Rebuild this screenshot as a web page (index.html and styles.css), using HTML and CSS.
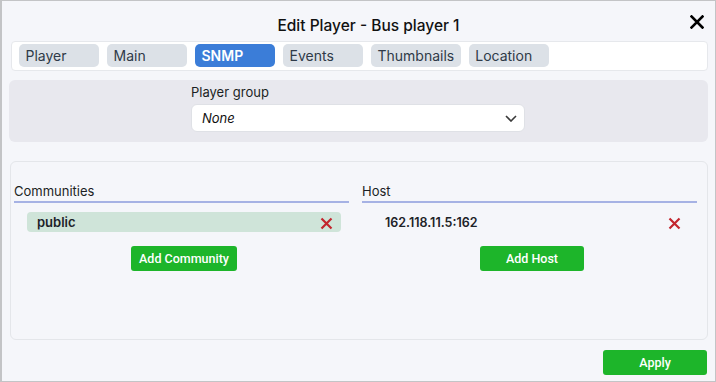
FILE: index.html
```html
<!DOCTYPE html>
<html lang="en">
<head>
<meta charset="utf-8">
<title>Edit Player</title>
<link rel="stylesheet" href="styles.css">
</head>
<body>
<div class="dialog">
  <div class="header">
    <div class="title">Edit Player - Bus player 1</div>
    <svg class="close" width="14" height="14" viewBox="0 0 14 14"><path d="M1.5 1.5 L12.5 12.5 M12.5 1.5 L1.5 12.5" stroke="#000" stroke-width="2.6" stroke-linecap="square" fill="none"/></svg>
  </div>
  <div class="tabs">
    <div class="tab">Player</div>
    <div class="tab">Main</div>
    <div class="tab active">SNMP</div>
    <div class="tab">Events</div>
    <div class="tab">Thumbnails</div>
    <div class="tab">Location</div>
  </div>
  <div class="group-panel">
    <div class="field-label">Player group</div>
    <div class="select">
      <span class="select-value">None</span>
      <svg class="chevron" width="12" height="7" viewBox="0 0 12 7"><path d="M1 1 L6 6 L11 1" stroke="#3a3a3a" stroke-width="1.6" fill="none"/></svg>
    </div>
  </div>
  <div class="snmp-panel">
    <div class="column">
      <div class="col-head">Communities</div>
      <div class="item filled">
        <span class="item-text">public</span>
        <svg class="remove" width="13" height="13" viewBox="0 0 13 13"><path d="M1.5 1.5 L11.5 11.5 M11.5 1.5 L1.5 11.5" stroke="#c3262e" stroke-width="2.2" fill="none"/></svg>
      </div>
      <div class="btn-row"><button class="btn">Add Community</button></div>
    </div>
    <div class="column">
      <div class="col-head">Host</div>
      <div class="item">
        <span class="item-text host">162.118.11.5:162</span>
        <svg class="remove" width="13" height="13" viewBox="0 0 13 13"><path d="M1.5 1.5 L11.5 11.5 M11.5 1.5 L1.5 11.5" stroke="#c3262e" stroke-width="2.2" fill="none"/></svg>
      </div>
      <div class="btn-row"><button class="btn wide">Add Host</button></div>
    </div>
  </div>
  <div class="footer">
    <button class="btn apply">Apply</button>
  </div>
</div>
</body>
</html>
```
FILE: styles.css
```css
* { box-sizing: border-box; }
html, body { margin: 0; padding: 0; }
body {
  font-family: Inter, "Noto Sans", sans-serif;
  color: #1b1f24;
  background: #f5f6fa;
}
.dialog {
  width: 716px;
  height: 382px;
  border: 1px solid #c3c4c6;
  border-left-width: 2px;
  background: #f5f6fa;
  display: flex;
  flex-direction: column;
}
.header {
  position: relative;
  height: 40px;
  display: flex;
  align-items: center;
  justify-content: center;
  padding-top: 9px;
}
.title {
  font-size: 15.5px;
  font-weight: 500;
  color: #111;
  padding-left: 20px;
}
.close {
  position: absolute;
  right: 11px;
  top: 14px;
}
.tabs {
  margin: 0 7px 0 9px;
  height: 30px;
  background: #fff;
  border: 1px solid #e6e8ec;
  border-radius: 4px;
  display: flex;
  gap: 8px;
  padding: 2px 7px;
}
.tab {
  min-width: 80px;
  height: 23px;
  padding: 0 6.5px;
  background: #dce1e7;
  color: #2f3a48;
  border-radius: 5px;
  font-size: 14px;
  line-height: 23px;
}
.tab.active {
  background: #3b7dd8;
  color: #fff;
  font-weight: 600;
}
.group-panel {
  margin: 9px 7px 0 7px;
  height: 62px;
  background: #e8e8ee;
  border-radius: 6px;
  padding: 4px 0 0 182px;
}
.field-label {
  font-size: 13px;
  line-height: 16px;
  color: #1b1f24;
}
.select {
  margin-top: 4px;
  width: 334px;
  height: 28px;
  background: #fff;
  border: 1px solid #dfe1e6;
  border-radius: 6px;
  display: flex;
  align-items: center;
  justify-content: space-between;
  padding: 0 7px 0 10px;
}
.select-value {
  font-size: 13px;
  font-style: italic;
  color: #111;
}
.snmp-panel {
  margin: 19px 7px 0 8px;
  height: 179px;
  border: 1px solid #e4e6ea;
  border-radius: 6px;
  display: grid;
  grid-template-columns: 335px 335px;
  column-gap: 13px;
  align-content: start;
  padding: 21px 10px 0 3px;
}
.col-head {
  font-size: 13px;
  line-height: 16px;
  padding-bottom: 2px;
  border-bottom: 2px solid #a6b2e4;
  color: #1b1f24;
}
.item {
  margin: 9px 8px 0 13px;
  height: 20px;
  border-radius: 4px;
  display: flex;
  align-items: center;
  justify-content: space-between;
  padding: 0 8px 0 10px;
}
.item.filled { background: #cfe4d9; }
.item-text {
  font-size: 13px;
  font-weight: 600;
  color: #1d2228;
}
.item-text.host { font-size: 12.5px; }
.remove { margin-top: 3px; }
.btn-row {
  margin: 14px 8px 0 13px;
  display: flex;
  justify-content: center;
}
.btn {
  height: 25px;
  border: 0;
  border-radius: 3px;
  background: #1db52a;
  color: #fff;
  font-family: Roboto, Inter, sans-serif;
  font-size: 12.5px;
  font-weight: 500;
  padding: 0 6px;
  min-width: 106px;
}
.btn.wide { min-width: 104px; }
.footer {
  display: flex;
  justify-content: flex-end;
  padding: 10px 8px 0 0;
}
.btn.apply { min-width: 104px; }
```
